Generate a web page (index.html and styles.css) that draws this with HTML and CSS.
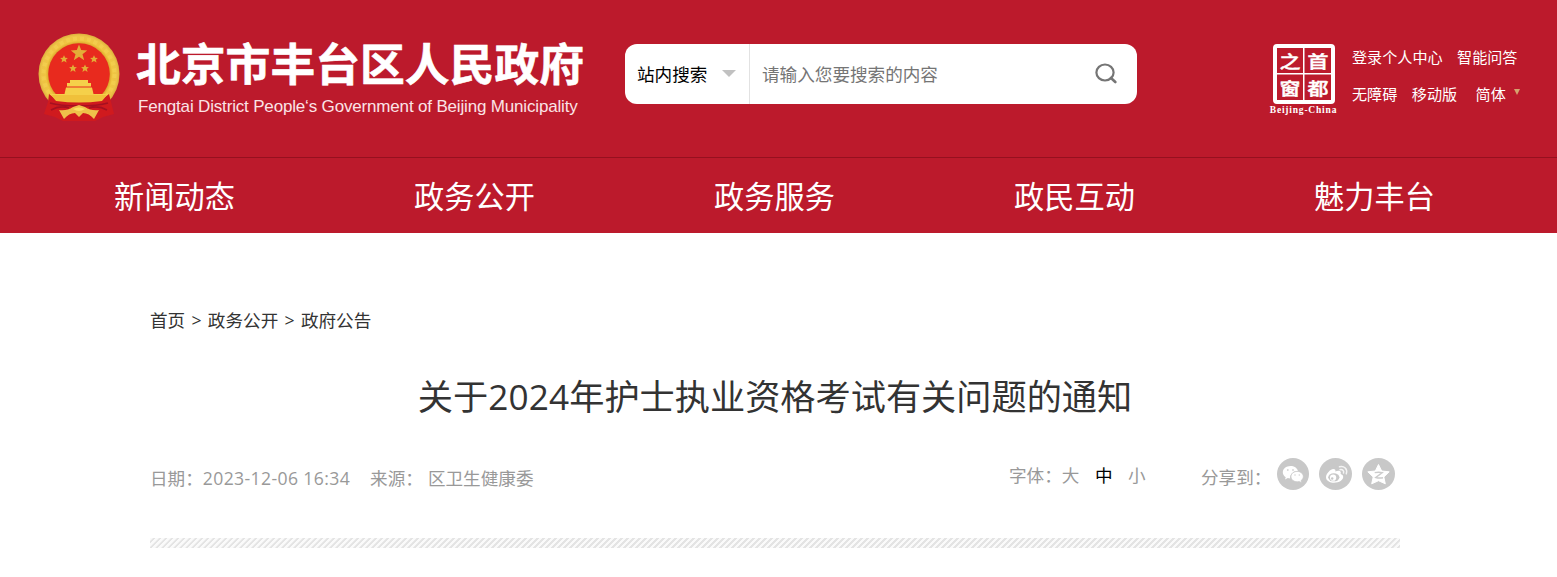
FILE: index.html
```html
<!DOCTYPE html>
<html lang="zh-CN">
<head>
<meta charset="utf-8">
<title>关于2024年护士执业资格考试有关问题的通知</title>
<link rel="stylesheet" href="styles.css">
</head>
<body>
<header class="header">
  <div class="header-top">
    <div class="brand">
      <svg class="emblem" viewBox="0 0 84 90" width="84" height="90">
        <defs>
          <radialGradient id="gold" cx="50%" cy="50%" r="50%"><stop offset=".75" stop-color="#d9a32a"/><stop offset=".82" stop-color="#f0c541"/><stop offset=".94" stop-color="#edc246"/><stop offset="1" stop-color="#dcae3c"/></radialGradient>
        </defs>
        <circle cx="42" cy="41" r="40.5" fill="url(#gold)"/>
        <circle cx="42" cy="41" r="35.500" fill="none" stroke="#fbe063" stroke-width="4" stroke-dasharray="4 3" opacity=".3"/>
        <circle cx="42" cy="41" r="30.800" fill="#e82a1e"/>
        <g fill="#e3ae38">
          <path d="M42 11.500l2.200 5.600 6 .3-4.700 3.800 1.700 6-5.200-3.500-5.200 3.500 1.700-6-4.700-3.800 6-.3z"/>
          <path id="s" d="M27 22.200l1.200 2.600 2.700.2-2.100 1.700.8 2.900-2.600-1.600-2.600 1.600.8-2.900-2.100-1.700 2.700-.2z"/>
          <use href="#s" x="30"/><use href="#s" x="9" y="9.300"/><use href="#s" x="21" y="9.300"/>
        </g>
        <g fill="#f5d04a">
          <path d="M33 47h18v3h3v3.500H30V50h3zM29 54.500h26l1.500 6.500H71v2.500H13V61h14.500z"/>
        </g>
        <path d="M12 61q4 4 10 6h40q6-2 10-6l2 8 3 12-11 3-8 4H26l-8-4-11-3 4-12z" fill="#d01a1e"/>
        <path d="M13 70q10 3 29 3t29-3M14 77q9-5 18-2M70 77q-9-5-18-2" fill="none" stroke="#a51020" stroke-width="1.800"/>
        <path d="M14 62h56l-5 6q-23 3-46 0z" fill="#f0c03a"/>
        <path d="M22 77q8 1 14-3l6-2 6 2q6 4 14 3l-5 9q-5-6-11-6l-4 4-4-4q-6 0-11 6z" fill="#efc14a"/>
        <path d="M36 76q6-3 12 0-6 4-12 0z" fill="#fbe063"/>
      </svg>
      <div class="brand-text">
        <div class="brand-name">北京市丰台区人民政府</div>
        <div class="brand-en">Fengtai District People‘s Government of Beijing Municipality</div>
      </div>
    </div>
    <div class="search">
      <div class="search-type">站内搜索<span class="caret"></span></div>
      <div class="search-input">请输入您要搜索的内容</div>
      <svg class="search-icon" viewBox="0 0 22 22" width="22" height="22"><ellipse cx="10" cy="9.500" rx="8.600" ry="8" fill="none" stroke="#757575" stroke-width="2.200"/><path d="M16 15l4.300 4" stroke="#757575" stroke-width="2.600" stroke-linecap="round"/></svg>
    </div>
    <div class="capital">
      <div class="seal"><span>之</span><span>首</span><span>窗</span><span>都</span></div>
      <div class="seal-en">Beijing-China</div>
    </div>
    <div class="links">
      <div class="links-row"><a>登录个人中心</a><a>智能问答</a></div>
      <div class="links-row"><a>无障碍</a><a>移动版</a><a class="lang">简体</a><span class="lang-caret"></span></div>
    </div>
  </div>
  <nav class="nav"><a>新闻动态</a><a>政务公开</a><a>政务服务</a><a>政民互动</a><a>魅力丰台</a></nav>
</header>
<main class="main">
  <div class="crumbs"><a>首页</a><span>&gt;</span><a>政务公开</a><span>&gt;</span><a>政府公告</a></div>
  <h1 class="title">关于<span class="year">2024</span>年护士执业资格考试有关问题的通知</h1>
  <div class="meta">
    <div class="info"><span>日期：<span class="date">2023-12-06 16:34</span></span><span class="source">来源：</span><span>区卫生健康委</span></div>
    <div class="sizes"><span>字体：</span><a>大</a><a class="active">中</a><a>小</a></div>
    <div class="share">
      <span class="share-label">分享到：</span>
      <svg viewBox="0 0 32 32" width="32" height="32"><circle cx="16" cy="16" r="16" fill="#c8c8c8"/><path d="M13.500 8c-4.300 0-7.700 2.800-7.700 6.300 0 2 1.100 3.700 2.900 4.900L8 21.500l2.800-1.400 2.400.4c-.5-4.500 3.200-7.800 7.700-7.600C20.200 10 17.100 8 13.500 8z" fill="#fff"/><path d="M20.200 13.400c-3.500 0-6.200 2.300-6.200 5.200s2.700 5.200 6.200 5.200l2-.3 2.400 1.300-.6-2.100c1.400-1 2.300-2.400 2.300-4.100 0-2.900-2.700-5.200-6.100-5.200z" fill="#fff" stroke="#c8c8c8" stroke-width=".7"/><g fill="#d4d4d4"><circle cx="10.800" cy="12" r=".9"/><circle cx="16" cy="12" r=".9"/><circle cx="18" cy="17" r=".8"/><circle cx="22.300" cy="17" r=".8"/></g></svg>
      <svg viewBox="0 0 33 32" width="33" height="32"><ellipse cx="16.500" cy="16" rx="16.500" ry="16" fill="#c8c8c8"/><path d="M14.300 11c-2.200-.2-7.300 4.400-7.300 8.200 0 3.600 4 5.500 8 5.500 5.400 0 9.200-2.900 9.200-5.700 0-1.800-1.200-2.600-2.600-3 .7-1.900 0-3.300-2-3.300-1.100 0-2.300.4-3.300.8.500-1.500 0-2.400-2-2.500z" fill="#fff"/><ellipse cx="14.800" cy="19.300" rx="5.600" ry="4" fill="#c8c8c8"/><circle cx="14.100" cy="19.700" r="3.100" fill="#fff"/><circle cx="13.200" cy="20.500" r="1.200" fill="#c8c8c8"/><path d="M20.500 8.800c4.600-1.200 8.400 2.300 6.800 7M21 11.700c2.500-.5 4.300 1.100 3.500 3.400" fill="none" stroke="#f4f4f4" stroke-width="1.500" stroke-linecap="round"/></svg>
      <svg viewBox="0 0 33 32" width="33" height="32"><ellipse cx="16.500" cy="16" rx="16.500" ry="16" fill="#c8c8c8"/><path d="M16.500 6.500l3.200 6.500 7.500.8-5.400 5.200 1.500 6.800-6.800-3.100L9.700 25.800l1.500-6.800-5.400-5.200 7.500-.8z" fill="#fff" stroke="#fff" stroke-width="1" stroke-linejoin="round"/><path d="M12.700 14.600q4-.8 7.600 0l-6.500 4.900q3.500 1 7.200.2" fill="none" stroke="#ccc" stroke-width="1.400"/></svg>
    </div>
  </div>
  <div class="stripes"></div>
</main>
</body>
</html>
```
FILE: styles.css
```css
* { box-sizing: border-box; }
body { margin: 0; background: #fff; font-family: "Open Sans", "Noto Sans CJK SC", sans-serif; color: #333; }
.header { background: #bc1a2c; color: #fff; height: 233px; }
.header-top { height: 158px; display: flex; align-items: flex-start; padding-left: 37px; border-bottom: 1px solid #96101f; }
.brand { display: flex; width: 588px; padding-top: 33px; }
.emblem { display: block; flex: none; }
.brand-text { padding-left: 15px; white-space: nowrap; }
.brand-name { font: bold 44.800px/58px "Noto Sans CJK SC", sans-serif; -webkit-text-stroke: .6px #fff; height: 62px; }
.brand-en { font: 17px/24px "Liberation Sans", sans-serif; color: #fbe3e6; padding-left: 2px; letter-spacing: -.17px; }
.search { display: flex; align-items: center; width: 512px; height: 60px; margin-top: 44px; background: #fff; border-radius: 12px; font-size: 17.600px; }
.search-type { width: 125px; height: 60px; padding: 0 0 2px 12px; border-right: 1px solid #e2e2e2; color: #000; display: flex; align-items: center; }
.caret { margin: 1px 0 0 15px; border: 7px solid transparent; border-top-color: #c1c1c1; border-bottom: 0; }
.search-input { width: 345px; padding: 0 0 2px 12px; color: #757575; }
.capital { width: 70px; margin: 44px 0 0 131px; }
.seal { width: 62px; height: 60px; margin-left: 5px; border: 4px solid #fff; border-radius: 4px; display: grid; grid-template-columns: 1fr 1fr; grid-template-rows: 1fr 1fr; gap: 2px; background: linear-gradient(#fff, #fff) center / 1.500px 100% no-repeat, linear-gradient(#fff, #fff) center / 100% 1.500px no-repeat; }
.seal span { display: block; text-align: center; font: 500 21px/22px "Noto Sans CJK SC", serif; -webkit-text-stroke: .5px #fff; transform: translateY(1px) scaleY(.8); }
.seal-en { font: bold 9.500px/10px "Liberation Serif", serif; text-align: center; letter-spacing: .8px; margin: 1px 0 0 1px; white-space: nowrap; }
.links { margin: 44px 0 0 14px; font-size: 15.100px; line-height: 27px; white-space: nowrap; }
.links-row { display: flex; align-items: flex-start; gap: 14.500px; height: 37px; }
.lang { margin-left: 4px; }
.lang-caret { margin: 8px 0 0 -6px; border: 3.500px solid transparent; border-top: 6px solid #d5a36e; border-bottom: 0; }
.nav { display: grid; grid-template-columns: repeat(5, 300px); padding-left: 24.500px; height: 75px; text-align: center; font-size: 30.200px; line-height: 78px; }
.main { width: 1250px; margin: 0 0 0 150px; padding-top: 74px; }
.crumbs { display: flex; gap: 6.300px; font-size: 17.600px; line-height: 26px; }
.title { margin: 33px 0 0; font-size: 35.200px; font-weight: 400; line-height: 60px; text-align: center; white-space: nowrap; }
.year { letter-spacing: .15px; }
.meta { display: flex; margin-top: 32px; height: 80px; color: #999; font-size: 17.600px; line-height: 32px; }
.info { display: flex; width: 859px; padding-top: 4px; }
.source { margin: 0 5px 0 20px; }
.date { letter-spacing: .38px; }
.sizes { display: flex; width: 192px; padding-top: 1px; }
.sizes a { margin-right: 15.500px; }
.sizes .active { color: #000; }
.share { display: flex; gap: 10px; }
.share-label { width: 66px; padding-top: 3px; white-space: nowrap; }
.stripes { height: 10px; background: repeating-linear-gradient(135deg, #fafafa 0 2px, #e4e4e4 2.300px 4px, #fafafa 4.240px); }
```
